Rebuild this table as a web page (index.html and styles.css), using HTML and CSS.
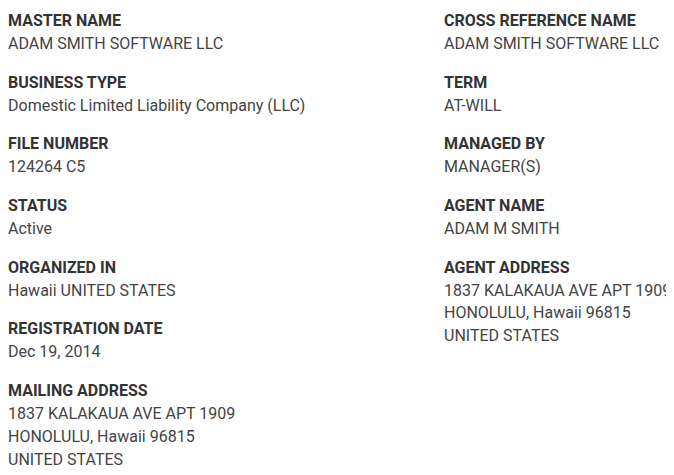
FILE: index.html
```html
<!DOCTYPE html>
<html>
<head>
<meta charset="utf-8">
<link rel="stylesheet" href="styles.css">
</head>
<body>
<div class="grid">
  <div class="col">
    <div class="item"><div class="label">MASTER NAME</div><div class="value">ADAM SMITH SOFTWARE LLC</div></div>
    <div class="item"><div class="label">BUSINESS TYPE</div><div class="value">Domestic Limited Liability Company (LLC)</div></div>
    <div class="item"><div class="label">FILE NUMBER</div><div class="value">124264 C5</div></div>
    <div class="item"><div class="label">STATUS</div><div class="value">Active</div></div>
    <div class="item"><div class="label">ORGANIZED IN</div><div class="value">Hawaii UNITED STATES</div></div>
    <div class="item"><div class="label">REGISTRATION DATE</div><div class="value">Dec 19, 2014</div></div>
    <div class="item"><div class="label">MAILING ADDRESS</div><div class="value">1837 KALAKAUA AVE APT 1909<br>HONOLULU, Hawaii 96815<br>UNITED STATES</div></div>
  </div>
  <div class="col">
    <div class="item"><div class="label">CROSS REFERENCE NAME</div><div class="value">ADAM SMITH SOFTWARE LLC</div></div>
    <div class="item"><div class="label">TERM</div><div class="value">AT-WILL</div></div>
    <div class="item"><div class="label">MANAGED BY</div><div class="value">MANAGER(S)</div></div>
    <div class="item"><div class="label">AGENT NAME</div><div class="value">ADAM M SMITH</div></div>
    <div class="item"><div class="label">AGENT ADDRESS</div><div class="value">1837 KALAKAUA AVE APT 1909<br>HONOLULU, Hawaii 96815<br>UNITED STATES</div></div>
  </div>
</div>
</body>
</html>
```
FILE: styles.css
```css
body {
  margin: 8px;
  font-family: Roboto, "Liberation Sans", sans-serif;
  font-size: 16px;
  line-height: 1.42857;
  color: #444;
  background: #fff;
}
.grid {
  display: grid;
  grid-template-columns: 436px 230px;
  padding-top: 2px;
}
.item {
  margin-bottom: 16px;
}
.item:last-child {
  margin-bottom: 0;
}
.label {
  font-weight: 700;
  color: #333;
  white-space: nowrap;
}
.value {
  color: #444;
  white-space: nowrap;
}
```
